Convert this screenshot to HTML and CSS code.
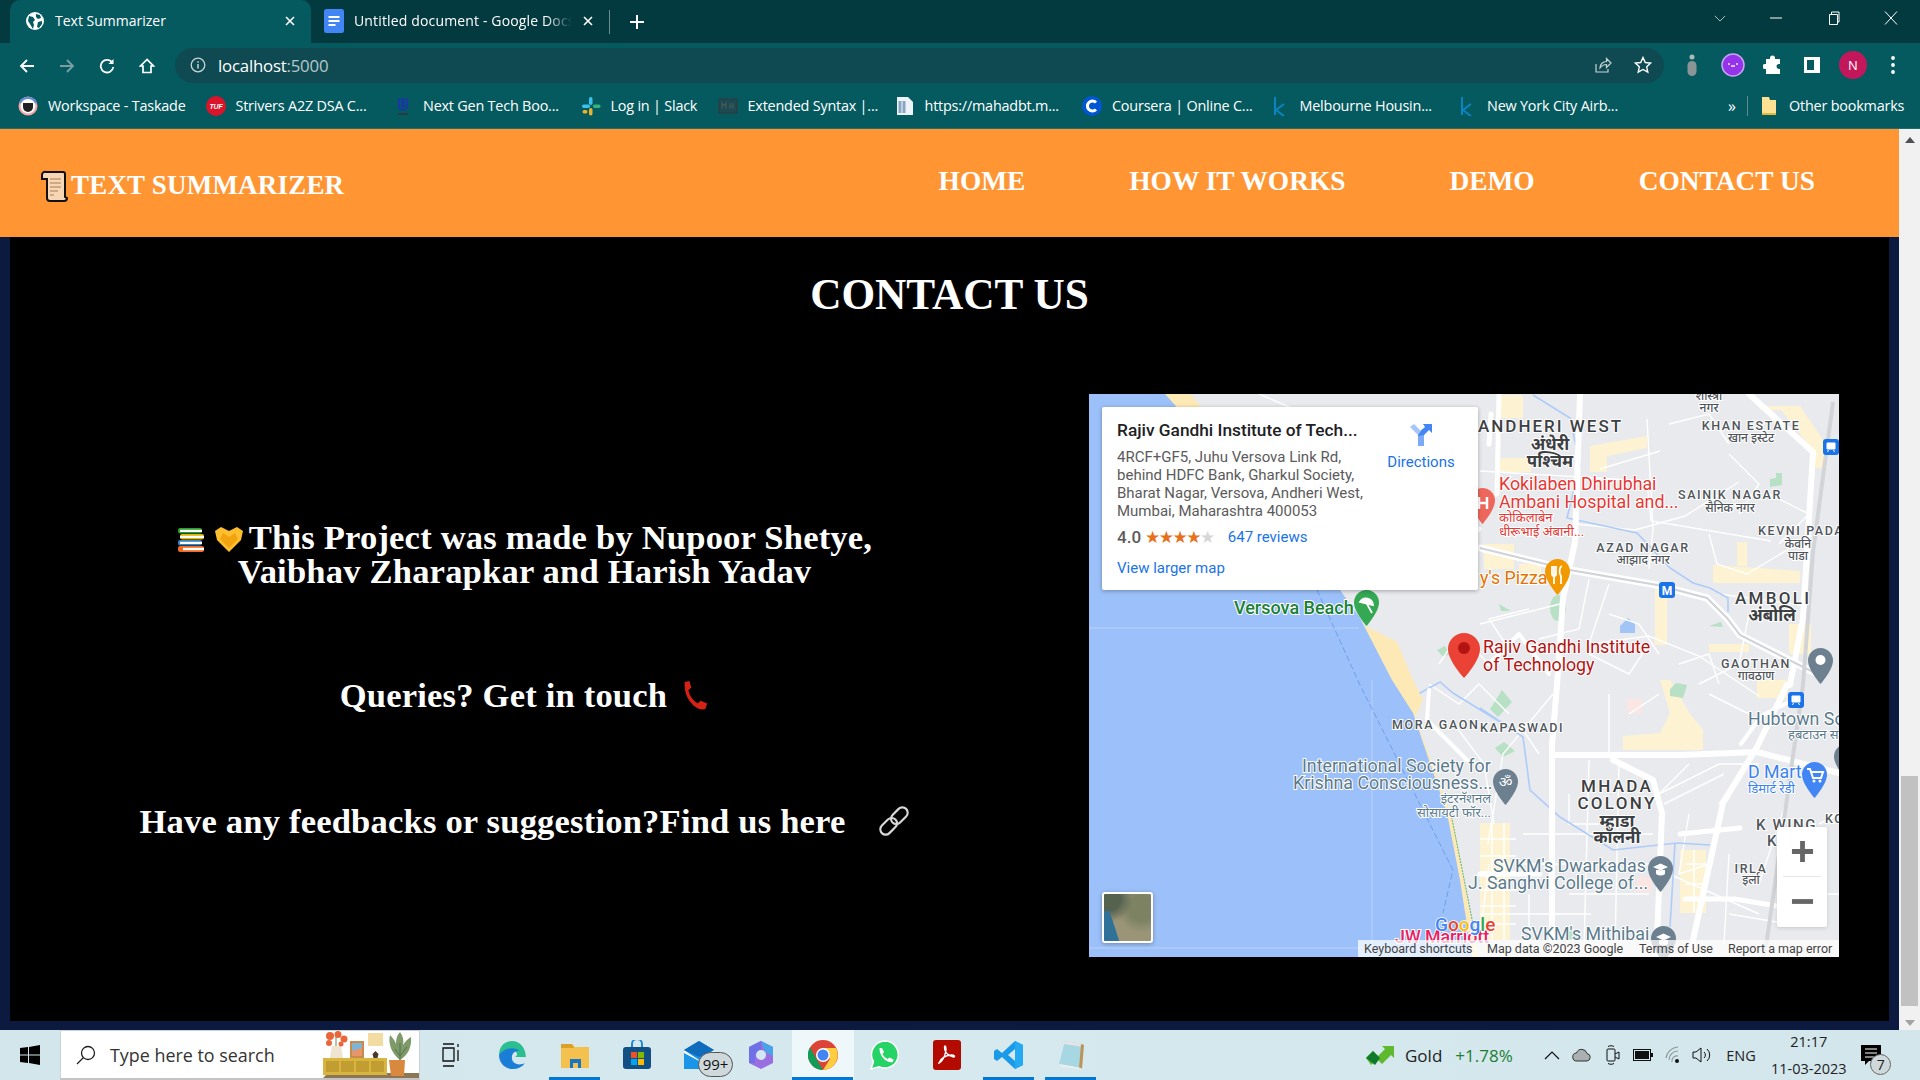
FILE: index.html
```html
<!DOCTYPE html>
<html lang="en">
<head>
    <meta charset="UTF-8">
    <meta name="viewport" content="width=device-width, initial-scale=1.0">
    <title>Text Summarizer</title>
    <link rel="stylesheet" href="styles.css">
</head>
<body>

<!-- Browser tabs -->
<div class="tabbar">
    <div class="tab tab-active">
        <svg class="tab-icon" viewBox="0 0 18 18"><circle cx="9" cy="9" r="9" fill="#fff"/><path d="M3 4l4 1 2 3-2 2 1 3-1 4-3-5-2-3zM10 2l4 1 1 3-3 1-2-2zM12 10l4-1 0 3-3 4-2-1z" fill="#055a60"/></svg>
        <span class="tab-title">Text Summarizer</span>
        <svg class="tab-close" viewBox="0 0 10 10"><path d="M1 1l8 8M9 1l-8 8" stroke="#fff" stroke-width="1.6"/></svg>
    </div>
    <div class="tab tab-second">
        <svg class="tab-icon doc-icon" viewBox="0 0 20 24"><rect width="20" height="24" rx="2.5" fill="#4285f4"/><path d="M4.500 8h11M4.500 12h11M4.500 16h7" stroke="#fff" stroke-width="1.8"/></svg>
        <span class="tab-title tab-fade">Untitled document - Google Docs</span>
        <svg class="tab-close" viewBox="0 0 10 10"><path d="M1 1l8 8M9 1l-8 8" stroke="#fff" stroke-width="1.6"/></svg>
    </div>
    <span class="tab-sep"></span>
    <svg class="tab-new" viewBox="0 0 14 14"><path d="M7 0v14M0 7h14" stroke="#fff" stroke-width="2"/></svg>
    <div class="win-controls">
        <svg class="win-chevron" viewBox="0 0 14 8"><path d="M1 1l6 6 6-6" fill="none" stroke="#c9d6d8" stroke-width="1"/></svg>
        <svg class="win-btn" viewBox="0 0 14 14"><path d="M1 7h12" stroke="#fff" stroke-width="1"/></svg>
        <svg class="win-btn win-restore" viewBox="0 0 14 14"><path d="M2.500 3.500h8v10h-8zM4.500 3.500V1h7.500v10h-1.500" fill="none" stroke="#fff" stroke-width="1"/></svg>
        <svg class="win-btn" viewBox="0 0 14 14"><path d="M1 0.500l12 13M13 0.500l-12 13" stroke="#fff" stroke-width="1"/></svg>
    </div>
</div>

<!-- Address bar -->
<div class="toolbar">
    <div class="nav-buttons">
        <svg viewBox="0 0 16 16"><path d="M15 8H2M8 2L2 8l6 6" fill="none" stroke="#fff" stroke-width="1.800"/></svg>
        <svg viewBox="0 0 16 16"><path d="M1 8h13M8 2l6 6-6 6" fill="none" stroke="#7c9ea2" stroke-width="1.800"/></svg>
        <svg viewBox="0 0 16 16"><path d="M13.500 5A6.300 6.300 0 1 0 14.300 9" fill="none" stroke="#fff" stroke-width="1.800"/><path d="M14.500 1v5h-5z" fill="#fff"/></svg>
        <svg viewBox="0 0 16 16"><path d="M8 1.500L1.500 8H4v6.500h8V8h2.500z" fill="none" stroke="#fff" stroke-width="1.700"/></svg>
    </div>
    <div class="omnibox">
        <svg class="info-icon" viewBox="0 0 16 16"><circle cx="8" cy="8" r="6.800" fill="none" stroke="#c5d3d5" stroke-width="1.300"/><path d="M8 7v4.500M8 4.300v1.400" stroke="#c5d3d5" stroke-width="1.500"/></svg>
        <span class="url">localhost<span class="url-port">:5000</span></span>
        <svg class="omni-action" viewBox="0 0 18 18"><path d="M2 8v8h12v-3M6 12c0-4 3-6.500 6.500-6.500V2.500L17 7l-4.500 4.500V8.500C9.500 8.500 7.500 10 6 12z" fill="none" stroke="#c5d3d5" stroke-width="1.200"/></svg>
        <svg class="omni-action" viewBox="0 0 18 18"><path d="M9 1.500l2.300 5 5.400.6-4 3.700 1.100 5.400L9 13.500l-4.800 2.700 1.100-5.400-4-3.700 5.400-.6z" fill="none" stroke="#fff" stroke-width="1.400"/></svg>
    </div>
    <div class="ext-icons">
        <svg viewBox="0 0 20 24"><circle cx="10" cy="4" r="2.500" fill="#aeb9ba"/><rect x="5.500" y="8" width="9" height="15" rx="4.500" fill="#8b9596"/></svg>
        <svg viewBox="0 0 24 24"><circle cx="12" cy="12" r="11" fill="#9333ea" stroke="#c9a5f0" stroke-width="1.500"/><path d="M7 11h2M15 11h2M10 13h4" stroke="#f1e4ff" stroke-width="1.500"/></svg>
        <svg viewBox="0 0 20 20"><path d="M7 3a2.500 2.500 0 0 1 5 0v1h5v5h-1a2.500 2.500 0 0 0 0 5h1v5H3v-5H2a2.500 2.500 0 0 1 0-5h1V4h4z" fill="#fff"/></svg>
        <svg viewBox="0 0 20 20"><rect x="2" y="2" width="16" height="16" fill="#fff"/><rect x="5" y="5" width="7" height="10" fill="#055a60"/></svg>
        <span class="avatar">N</span>
        <svg viewBox="0 0 6 20"><circle cx="3" cy="3" r="1.900" fill="#fff"/><circle cx="3" cy="10" r="1.900" fill="#fff"/><circle cx="3" cy="17" r="1.900" fill="#fff"/></svg>
    </div>
</div>

<!-- Bookmarks -->
<div class="bookmarks">
    <a class="bm">
        <svg viewBox="0 0 20 20"><circle cx="10" cy="10" r="9.500" fill="#f8a5a5"/><circle cx="10" cy="10" r="7.500" fill="#fff"/><path d="M5 7h10v4a5 5 0 0 1-10 0z" fill="#222"/><path d="M2 7a9 9 0 0 1 16 0" fill="none" stroke="#5a8fd8" stroke-width="2"/></svg>
        <span>Workspace - Taskade</span>
    </a>
    <a class="bm">
        <svg viewBox="0 0 20 20"><circle cx="10" cy="10" r="10" fill="#d9142b"/><text x="10" y="12.500" class="tuf-text">TUF</text></svg>
        <span>Strivers A2Z DSA C...</span>
    </a>
    <a class="bm">
        <svg viewBox="0 0 20 20"><path d="M6 2v8a4 4 0 0 0 8 0V2M9 2v8a1 1 0 0 0 2 0V2" fill="none" stroke="#1c2fb8" stroke-width="1.500"/><path d="M5 18h10" stroke="#333" stroke-width="1.500"/></svg>
        <span>Next Gen Tech Boo...</span>
    </a>
    <a class="bm bm-short">
        <svg viewBox="0 0 20 20"><rect x="8" y="1" width="3.500" height="8" rx="1.700" fill="#36c5f0"/><rect x="1" y="8.500" width="8" height="3.500" rx="1.700" fill="#36c5f0"/><rect x="12" y="8.500" width="7.500" height="3.500" rx="1.700" fill="#2eb67d"/><rect x="8" y="12" width="3.500" height="7.500" rx="1.700" fill="#ecb22e"/><rect x="1.500" y="14" width="5" height="3.500" rx="1.700" fill="#ecb22e"/></svg>
        <span>Log in | Slack</span>
    </a>
    <a class="bm bm-mid">
        <svg viewBox="0 0 20 20"><rect x="1" y="3" width="18" height="14" fill="#1c4a50" stroke="#2d3b3d"/><path d="M4 13V7l2 3 2-3v6M12 7v6M15 7v6M12 10h3" stroke="#44595c" stroke-width="1.200" fill="none"/></svg>
        <span>Extended Syntax |...</span>
    </a>
    <a class="bm">
        <svg viewBox="0 0 20 20"><path d="M2 1h11l5 5v13H2z" fill="#eef3f8"/><path d="M5 5v12M9 5v12" stroke="#88a6c4" stroke-width="3"/></svg>
        <span>https://mahadbt.m...</span>
    </a>
    <a class="bm">
        <svg viewBox="0 0 20 20"><circle cx="10" cy="10" r="10" fill="#0056d2"/><path d="M14 6.500a5 5 0 1 0 0 7" fill="none" stroke="#fff" stroke-width="3"/></svg>
        <span>Coursera | Online C...</span>
    </a>
    <a class="bm">
        <svg viewBox="0 0 20 20"><path d="M5 1v18M14 8l-8 6 8 6" fill="none" stroke="#0a85c2" stroke-width="2"/></svg>
        <span>Melbourne Housin...</span>
    </a>
    <a class="bm bm-last">
        <svg viewBox="0 0 20 20"><path d="M5 1v18M14 8l-8 6 8 6" fill="none" stroke="#0a85c2" stroke-width="2"/></svg>
        <span>New York City Airb...</span>
    </a>
    <span class="bm-more">»</span>
    <span class="bm-sep"></span>
    <a class="bm bm-other">
        <svg viewBox="0 0 20 20"><path d="M3 1h7l1 3h6v15H3z" fill="#fde293"/><path d="M3 17h14v2H3z" fill="#e2b93b"/></svg>
        <span>Other bookmarks</span>
    </a>
</div>

<div class="viewport">
    <div class="page">
        <header class="site-header">
            <div class="logo">
                <svg class="logo-scroll" viewBox="0 0 28 32"><path d="M6 2h17a2 2 0 0 1 2 2v23l2 1a3 3 0 0 1-3 3H10a3 3 0 0 1-3-3V9H2V5a3 3 0 0 1 4-3z" fill="#f6d6b5" stroke="#111" stroke-width="2"/><path d="M10 9h11M10 13h11M10 17h11M10 21h8M10 25h4" stroke="#c49b73" stroke-width="1.500"/></svg>
                <span>TEXT SUMMARIZER</span>
            </div>
            <nav class="site-nav">
                <a>HOME</a>
                <a>HOW IT WORKS</a>
                <a>DEMO</a>
                <a>CONTACT US</a>
            </nav>
        </header>

        <main class="contact">
            <h1>CONTACT US</h1>
            <div class="contact-row">
                <div class="contact-text">
                    <p class="credits">
                        <svg class="emoji" viewBox="0 0 28 26"><rect x="1" y="1" width="24" height="5.500" rx="2" fill="#2aa02a"/><rect x="3" y="2.800" width="22" height="2.200" fill="#fff"/><rect x="3" y="7" width="24" height="5.500" rx="2" fill="#e3b505"/><rect x="3" y="8.800" width="24" height="2.200" fill="#fff"/><rect x="1" y="13" width="24" height="5.500" rx="2" fill="#3584c8"/><rect x="3" y="14.800" width="22" height="2.200" fill="#fff"/><rect x="1" y="19" width="26" height="6" rx="2" fill="#f26a21"/><rect x="6" y="20.800" width="21" height="2.400" fill="#fff"/></svg>
                        <svg class="emoji hands" viewBox="0 0 30 28"><path d="M1 6l6-4 8 4 8-4 6 4-2 9-12 12L3 15z" fill="#ffbe2e"/><path d="M9 8l6 4 6-4 3 6-9 9-9-9z" fill="#f2a310"/></svg>
                        This Project was made by Nupoor Shetye,<br>Vaibhav Zharapkar and Harish Yadav
                    </p>
                    <p class="queries">
                        Queries? Get in touch
                        <svg class="emoji phone" viewBox="0 0 28 32"><path d="M3 2l5-1 2 7-3 3c1 6 5 11 10 14l3-3 7 3-2 6c-3 1-7 0-10-2C8 24 2 15 3 2z" fill="#d62214"/></svg>
                    </p>
                    <p class="feedback">
                        Have any feedbacks or suggestion?Find us here
                        <svg class="emoji link" viewBox="0 0 30 30"><g fill="none" stroke="#d8d8d8" stroke-width="2"><rect x="-9" y="-5" width="18" height="10" rx="5" transform="translate(10 20) rotate(-45)"/><rect x="-9" y="-5" width="18" height="10" rx="5" transform="translate(20 10) rotate(-45)"/></g></svg>
                    </p>
                </div>

                <div class="map">
                    <svg class="map-canvas" viewBox="0 0 750 563">
                        <defs>
                            <path id="pin" d="M12.500 0C5.600 0 0 5.600 0 12.500 0 22 12.500 36 12.500 36S25 22 25 12.500C25 5.600 19.400 0 12.500 0z"/>
                        </defs>
                        <rect width="750" height="563" fill="#e8eaed"/>

                        <!-- yellow blocks -->
                        <g fill="#fdf3d2">
                            <path d="M408 1h26v23h-26zM501 52l57-10v12l-40 8v16h-17zM671 12l40 0 27 40v22h-12l-4-20-30-38h-21zM566 191h12v60h-12zM624 171l87 6v12h-87zM648 148h10v24h-10z"/>
                            <path d="M571 286h10l20 34 13 16v20h-80v-14l37-3 10-20zM591 456h26v63h-26zM391 429h30v117h-30zM668 286h30v18h-30zM620 250h40v8h-40z"/>
                            <path d="M395 150h30v25h-30zM410 64h32v14h-32zM430 170h22v14h-22zM700 230h22v30h-22z"/>
                        </g>
                        <!-- parks, water blobs -->
                        <g fill="#b7e0c4">
                            <path d="M681 85l6-1 0-5 6 0 0 12-12 2zM581 295l6-6 11 2-4 13-13-2zM406 354l9-6 11 9-12 6zM401 315l12-19 10 12-14 15z"/>
                            <ellipse cx="469" cy="214" rx="8" ry="13"/>
                            <path d="M410 210l12 7-10 0zM620 232l12-4 2 5zM645 470l12 0 0 8zM473 540l10-5 6 9-12 2zM348 256l8-4 5 8-7 3z"/>
                        </g>
                        <path d="M538 305h15v14h-15zM548 483h15v15h-15z" fill="#fbe6e4"/>
                        <path d="M531 232l8-8 7 6v9h-15z" fill="#a3c4f6"/>

                        <!-- thin streets -->
                        <g fill="none" stroke="#fff" stroke-width="1.400">
                            <path d="M391 77l167 10 4 40 120 20M558 25l6 110-4 40M511 75l60-18M486 130l60 6 50-14 54-34M620 140l8 30 30 10 50-30M630 200l90 12M391 230l80-20M500 185l-10 50-40 10M520 190l-20 60 60-8 50 20 60 40M660 220l-10 50-40 20"/>
                            <path d="M464 300l-50 60-15 90M500 366l-5 190M530 366l-4 190M434 440l130 0M434 470l130 0M600 370l-30 30 60-30 40 0M575 410l60-30M670 350l-40 60M640 460l-5 90M580 480l90 40M620 300l40 20M520 300l0 60M570 300l-30 20M700 400l-30 90M480 500l80 0M391 520l80 0M640 520l60 10"/>
                            <path d="M340 290l30 20 20-20 30 30M365 330l30 40 10 60M400 470l-10 80M430 330l20 30M350 270l20 -30 30 30M730 430l20 -10M725 500l25 0M170 0l70 30M60 0l40 30"/>
                            <path d="M500 260l40 20 20-30M590 270l30-10 10 30M520 220l30 10 20 30M420 255l-20-30 40-10M600 420l-10 60 30-10M480 400l0 30 30 0M440 500l0 50M462 520l40 0M680 100l40 20-30 30M640 60l30 30-20 30M580 30l40-10 20 30"/>
                            <path d="M391 445h36M391 462h36M391 478h36M391 496h36M391 512h36M391 530h36M403 429v117M415 429v117M597 470h20M597 490h20M605 456v63"/>
                        </g>
                        <!-- creeks -->
                        <g fill="none" stroke="#aecbfa" stroke-width="1.600">
                            <path d="M444 1l37 23 10 47-13 53 70 15 33 35 23 15 17 5 18 10v14"/>
                            <path d="M391 314l43 29 7 53 30 27 53 33 64-7 33 2M586 449l-5 84M324 303l27-15 13 11 47 29"/>
                        </g>
                        <!-- main roads -->
                        <g fill="none" stroke="#fff" stroke-linecap="round" stroke-linejoin="round">
                            <path stroke-width="6" d="M491 0l-5 148-12 56-6 87-5 60v212"/>
                            <path stroke-width="6" d="M660 0l64 58-10 166-13 67-3 0-30 62-34 56-30 137-3 17"/>
                            <path stroke-width="6" d="M464 361h127l77-3 82 21M524 366l40 20 9 33-5 127v17"/>
                            <path stroke-width="5" d="M568 550l-3 13M596 505l50 0 60 10M200 35l75 70 60 60 55 -30M391 480h60M410 0l-2 100M402 20l-2 30M591 440l60 -6"/>
                            <path stroke-width="4" d="M340 296l-2 30 40 40M652 350l20 -28 40 -20M400 270l30 -30 30 40"/>
                            <path stroke-width="7" d="M391 154l90 22 87 15 50 13 20 20 13 17 73 37"/>
                        </g>
                        <path fill="none" stroke="#cfd2d6" stroke-width="2" d="M391 154l90 22 87 15 50 13 20 20 13 17 73 37"/>
                        <path fill="none" stroke="#d2d4d8" stroke-width="4" d="M744 8l-20 150-10 133-36 255-4 17"/>

                        <!-- sea and sand -->
                        <path fill="#fde9b5" d="M86 0h16l144 190 28 41 34 17 16 38 10 20-8 17 38 103 17 93 8 44H0V0z"/>
                        <path fill="#9cc0f9" d="M0 0h76l54 60 70 70 51 66 20 28 32 62 21 33 34 100 13 67 12 77H0z"/>
                        <g fill="none" stroke="#b9d2fa" stroke-width="1">
                            <path d="M0 234h270M283 286v277M0 554h380"/>
                        </g>
                        <path fill="none" stroke="#6e9eee" stroke-width="1" stroke-dasharray="6 3" d="M228 196l43 95 93 185-10 43"/>
                        <path fill="none" stroke="#5db36b" stroke-width="1" stroke-dasharray="2 1" d="M362 420l18 90 8 40"/>

                        <!-- area labels -->
                        <g class="area">
                            <text x="389" y="38" class="big">ANDHERI WEST</text>
                            <text x="662" y="36" class="mid">KHAN ESTATE</text>
                            <text x="641" y="105" class="mid">SAINIK NAGAR</text>
                            <text x="669" y="141" class="mid left">KEVNI PADA</text>
                            <text x="554" y="158" class="mid">AZAD NAGAR</text>
                            <text x="646" y="210" class="big left wide">AMBOLI</text>
                            <text x="667" y="274" class="mid">GAOTHAN</text>
                            <text x="303" y="335" class="mid left">MORA GAON</text>
                            <text x="391" y="338" class="mid left">KAPASWADI</text>
                            <text x="528" y="398" class="big mid-anchor wide">MHADA</text>
                            <text x="528" y="415" class="big mid-anchor wide">COLONY</text>
                            <text x="667" y="436" class="mid left big-ish">K WING</text>
                            <text x="736" y="429" class="mid left">KO</text>
                            <text x="678" y="452" class="mid left big-ish">K</text>
                            <text x="662" y="479" class="mid">IRLA</text>
                        </g>
                        <g class="hindi">
                            <text x="620" y="6">शास्त्री</text>
                            <text x="620" y="18">नगर</text>
                            <text x="461" y="56" class="hindi-big">अंधेरी</text>
                            <text x="461" y="73" class="hindi-big">पश्चिम</text>
                            <text x="662" y="48">खान इस्टेट</text>
                            <text x="641" y="118">सैनिक नगर</text>
                            <text x="709" y="154">केवनि</text>
                            <text x="709" y="166">पाडा</text>
                            <text x="554" y="170">आझाद नगर</text>
                            <text x="683" y="227" class="hindi-big">अंबोलि</text>
                            <text x="667" y="286">गावठाण</text>
                            <text x="528" y="433" class="hindi-big">म्हाडा</text>
                            <text x="528" y="449" class="hindi-big">कॉलनी</text>
                            <text x="662" y="490">इर्ला</text>
                        </g>

                        <!-- places -->
                        <g class="place">
                            <text x="410" y="96" class="red">Kokilaben Dhirubhai</text>
                            <text x="410" y="114" class="red">Ambani Hospital and...</text>
                            <text x="410" y="128" class="red small">कोकिलाबेन</text>
                            <text x="410" y="142" class="red small">धीरूभाई अंबानी...</text>
                            <text x="391" y="190" class="orange">y's Pizza</text>
                            <text x="394" y="259" class="dark-red">Rajiv Gandhi Institute</text>
                            <text x="394" y="277" class="dark-red">of Technology</text>
                            <text x="145" y="220" class="green">Versova Beach</text>
                            <text x="659" y="331" class="slate">Hubtown So</text>
                            <text x="699" y="345" class="slate small">हबटाउन स</text>
                            <text x="659" y="384" class="blue">D Mart</text>
                            <text x="659" y="399" class="blue small">डिमार्ट रेडी</text>
                            <text x="213" y="378" class="slate">International Society for</text>
                            <text x="204" y="395" class="slate">Krishna Consciousness...</text>
                            <text x="402" y="409" class="slate small end">इंटरनॅशनल</text>
                            <text x="402" y="423" class="slate small end">सोसायटी फॉर...</text>
                            <text x="404" y="478" class="slate">SVKM's Dwarkadas</text>
                            <text x="379" y="495" class="slate">J. Sanghvi College of...</text>
                            <text x="432" y="546" class="slate">SVKM's Mithibai</text>
                            <text x="306" y="549" class="pink">JW Marriott</text>
                        </g>

                        <!-- pins -->
                        <use href="#pin" x="381" y="94" fill="#ee675c"/>
                        <path d="M390 103v12M398 103v12M390 109h8" stroke="#fff" stroke-width="2.500"/>
                        <use href="#pin" x="456" y="165" fill="#f29900"/>
                        <path d="M463 172v8a2 2 0 0 0 4 0v-8M465 172v18M473 172c-3 1-3 8-1 10v8" stroke="#fff" stroke-width="1.800" fill="none"/>
                        <use href="#pin" x="265" y="196" fill="#34a853"/>
                        <path d="M271 208a7 7 0 0 1 13 3l-13-3zM278 210l5 9" stroke="#fff" stroke-width="1.800" fill="#fff"/>
                        <use href="#pin" x="719" y="254" fill="#6c8090"/>
                        <circle cx="731.500" cy="266" r="5" fill="#fff"/>
                        <use href="#pin" x="713" y="368" fill="#4285f4"/>
                        <path d="M718 375h3l3 9h8l2-6h-12" fill="none" stroke="#fff" stroke-width="2"/><circle cx="725" cy="387" r="1.500" fill="#fff"/><circle cx="731" cy="387" r="1.500" fill="#fff"/>
                        <use href="#pin" x="404" y="375" fill="#6c8090"/>
                        <text x="416.500" y="393" class="pin-glyph">ॐ</text>
                        <use href="#pin" x="559" y="462" fill="#6c8090"/>
                        <path d="M564 473l7.500-3.500 7.500 3.500-7.500 3.500zM567 476v4c3 2 6 2 9 0v-4" fill="#fff"/>
                        <use href="#pin" x="562" y="532" fill="#6c8090"/>
                        <path d="M567 543l7.500-3.500 7.500 3.500-7.500 3.500zM570 546v4c3 2 6 2 9 0v-4" fill="#fff"/>
                        <use href="#pin" x="745" y="350" fill="#6c8090"/>
                        <g>
                            <path d="M375 239a16 16 0 0 0-16 16c0 12 16 29 16 29s16-17 16-29a16 16 0 0 0-16-16z" fill="#ea4335"/>
                            <circle cx="375" cy="254" r="6" fill="#b31412"/>
                        </g>
                        <!-- transit badges -->
                        <rect x="734" y="45" width="16" height="16" rx="3" fill="#1a73e8"/>
                        <path d="M738 49h8v6h-8zM739.500 56l-1 2M744.500 56l1 2" fill="#fff" stroke="#fff"/>
                        <rect x="699" y="298" width="16" height="16" rx="3" fill="#1a73e8"/>
                        <path d="M703 302h8v6h-8zM704.500 309l-1 2M709.500 309l1 2" fill="#fff" stroke="#fff"/>
                        <rect x="570" y="188" width="16" height="16" rx="3" fill="#1a73e8"/>
                        <text x="578" y="200.500" class="metro">M</text>

                        <!-- google mark -->
                        <text x="346" y="537" class="google"><tspan fill="#4285f4">G</tspan><tspan fill="#ea4335">o</tspan><tspan fill="#fbbc04">o</tspan><tspan fill="#4285f4">g</tspan><tspan fill="#34a853">l</tspan><tspan fill="#ea4335">e</tspan></text>
                    </svg>

                    <!-- info card, over the map -->
                    <div class="map-card">
                        <div class="card-main">
                            <div class="card-title">Rajiv Gandhi Institute of Tech...</div>
                            <div class="card-address">4RCF+GF5, Juhu Versova Link Rd,<br>behind HDFC Bank, Gharkul Society,<br>Bharat Nagar, Versova, Andheri West,<br>Mumbai, Maharashtra 400053</div>
                            <div class="card-rating">
                                <span class="rating-num">4.0</span>
                                <span class="stars">★★★★<span class="star-off">★</span></span>
                                <a class="card-link reviews">647 reviews</a>
                            </div>
                            <a class="card-link larger">View larger map</a>
                        </div>
                        <div class="card-dir">
                            <svg viewBox="0 0 24 24"><path d="M14 1h9v9l-3-3-5 5v11h-6V10l7-6z" fill="#4285f4"/><path d="M1 4l4-3 7 7-3 4z" fill="#a6c5fa"/><path d="M9 23V13l6-1v11z" fill="#7baaf7"/></svg>
                            <a class="card-link">Directions</a>
                        </div>
                    </div>

                    <div class="map-thumb"></div>

                    <div class="zoom-ctl">
                        <svg viewBox="0 0 24 24"><path d="M12 1v22M1 12h22" stroke="#666" stroke-width="5"/></svg>
                        <span class="zoom-sep"></span>
                        <svg viewBox="0 0 24 24"><path d="M1 12h22" stroke="#666" stroke-width="5"/></svg>
                    </div>

                    <div class="map-attrib">
                        <span class="attr-keys">Keyboard shortcuts</span>
                        <span class="attr-data">Map data ©2023 Google</span>
                        <span class="attr-terms">Terms of Use</span>
                        <span>Report a map error</span>
                    </div>
                </div>
            </div>
        </main>
    </div>

    <div class="scrollbar">
        <span class="arrow-up"></span>
        <span class="scroll-thumb"></span>
        <span class="arrow-down"></span>
    </div>
</div>

<!-- Windows taskbar -->
<div class="taskbar">
    <div class="start">
        <svg viewBox="0 0 20 20"><path d="M0 3l8-1v7.500H0zM9 1.900L20 0v9.500H9zM0 10.500h8V18l-8-1zM9 10.500h11V20L9 18.100z" fill="#000"/></svg>
    </div>
    <div class="search">
        <svg class="search-icon" viewBox="0 0 20 20"><circle cx="12" cy="8" r="6.500" fill="none" stroke="#222" stroke-width="1.300"/><path d="M7.500 12.500L1 19" stroke="#222" stroke-width="1.300"/></svg>
        <span class="search-text">Type here to search</span>
        <svg class="search-art" viewBox="0 0 96 47">
            <path d="M0 47l5-5h91v5z" fill="#8d7655"/>
            <rect x="0" y="27" width="64" height="17" fill="#d8b53f"/>
            <path d="M3 30h13v11H3zM18 30h13v11H18zM33 30h13v11H33zM48 30h13v11H48z" fill="#c29e32"/>
            <path d="M9 15h9l2 12H7z" fill="#efe4cf"/>
            <path d="M13 15V6" stroke="#6b8a4a"/>
            <g fill="#e8673a"><circle cx="7" cy="5" r="4"/><circle cx="15" cy="3.500" r="3.500"/><circle cx="21" cy="8" r="3.500"/><circle cx="6" cy="12" r="3"/><circle cx="18" cy="13" r="2.500"/></g>
            <rect x="27" y="10" width="14" height="17" fill="#c98a4a"/><rect x="29" y="12" width="10" height="13" fill="#7fb4d6"/><path d="M29 20l10-3v8H29z" fill="#e9956a"/>
            <rect x="45" y="2" width="15" height="13" fill="#f3dca1"/><path d="M52.500 15v5l-3 3 1 4h4l1-4-3-3z" fill="#4c3a2a"/>
            <path d="M77 29c-9-7-12-17-10-25 3 3 5 6 6 9 0-5 1-9 4-12 3 4 4 8 3 13 2-3 4-6 8-8 1 10-3 18-11 23z" fill="#7d9a68"/>
            <path d="M77 29V12M72 18l5 7M84 16l-7 9" stroke="#54704a" fill="none"/>
            <path d="M66 29h16l-1 16H68z" fill="#d9893d"/>
        </svg>
    </div>
    <div class="tb-apps">
        <div class="tb-slot">
            <svg class="icon-sm" viewBox="0 0 20 24"><path d="M2 1h11M2 23h11M2 5h11v13H2zM17 1v3M17 7v11" fill="none" stroke="#111" stroke-width="1.300"/></svg>
        </div>
        <div class="tb-slot">
            <svg viewBox="0 0 30 30"><path d="M28 18C28 8 22 1 14 1 6 1 1 7 1 15c4-6 12-8 17-3 2 2 1 4-1 5h11z" fill="#2bbf8f"/><path d="M1 15c0 8 6 14 14 14 5 0 9-2 12-6-6 3-12 1-13-4-1-6 4-9 8-8-6-5-16-3-21 4z" fill="#1b7ed6"/></svg>
        </div>
        <div class="tb-slot open">
            <svg viewBox="0 0 30 28"><path d="M1 3h11l3 3h14v21H1z" fill="#f4c04e"/><path d="M1 3h11l2 4H1z" fill="#dc9f2a"/><rect x="10" y="18" width="11" height="9" fill="#1976c4"/><rect x="13" y="22" width="5" height="5" fill="#f4c04e"/></svg>
        </div>
        <div class="tb-slot">
            <svg viewBox="0 0 30 30"><path d="M10 8V4a5 5 0 0 1 10 0v4" fill="none" stroke="#1e88d8" stroke-width="2"/><rect x="1" y="7" width="28" height="22" rx="3" fill="#114f84"/><path d="M9 12h6v6H9z" fill="#f25022"/><path d="M16 12h6v6h-6z" fill="#7fba00"/><path d="M9 19h6v6H9z" fill="#00a4ef"/><path d="M16 19h6v6h-6z" fill="#ffb900"/></svg>
        </div>
        <div class="tb-slot">
            <svg viewBox="0 0 30 28"><path d="M15 0L30 9v19H0V9z" fill="#1a95e8"/><path d="M0 9l15 10L30 9v3L15 20 0 12z" fill="#fff"/><path d="M15 0L30 9 15 16 0 9z" fill="#0f6cbd"/></svg>
            <span class="mail-badge">99+</span>
        </div>
        <div class="tb-slot">
            <svg viewBox="0 0 28 30"><path d="M14 1l12 6v16l-12 6-12-6V7z" fill="#9a6ee0"/><path d="M14 1l12 6v9l-8-4z" fill="#4aa3e8"/><path d="M2 7l12-6v9l-6 4v9l-6 0z" fill="#6f6fe6"/><circle cx="14" cy="15" r="5" fill="#d3e8ee"/></svg>
        </div>
        <div class="tb-slot active">
            <svg viewBox="0 0 30 30"><circle cx="15" cy="15" r="15" fill="#db4437"/><path d="M15 30A15 15 0 0 1 2 7.500L9 20z" fill="#0f9d58"/><path d="M15 8h13a15 15 0 0 1-13 22l7-11z" fill="#ffcd40"/><circle cx="15" cy="15" r="7" fill="#fff"/><circle cx="15" cy="15" r="5.500" fill="#4285f4"/></svg>
        </div>
        <div class="tb-slot">
            <svg viewBox="0 0 30 30"><path d="M15 1a13.500 13.500 0 0 0-11.500 20.500L1 29l8-2.300A13.500 13.500 0 1 0 15 1z" fill="#25d366" stroke="#fff" stroke-width="1.500"/><path d="M10 8l2 0 2 4-1.500 2c1 2 3 4 5 5l2-1.500 4 2-.5 2.500c-6 2-14-6-13.500-14z" fill="#fff"/></svg>
        </div>
        <div class="tb-slot">
            <svg viewBox="0 0 28 30"><rect width="28" height="30" rx="3" fill="#b30b00"/><path d="M6 23c4-2 6-7 7-13 0-4-1-5-1.500-3-.5 4 3 9 9 10 2 0 1-2-2-2-5 0-11 3-12.500 8z" fill="none" stroke="#fff" stroke-width="1.400"/></svg>
        </div>
        <div class="tb-slot open">
            <svg viewBox="0 0 30 30"><path d="M21 1l8 4v20l-8 4-13-12-5 4-3-2V11l3-2 5 4zM21 9l-7 6 7 6z" fill="#1a9ae8"/><path d="M21 1l8 4v20l-8 4z" fill="#23aaf2"/></svg>
        </div>
        <div class="tb-slot open">
            <svg viewBox="0 0 28 30"><path d="M8 1l18 3-2 24L2 24z" fill="#a6d7e2"/><path d="M8 1l18 3v3L7 4z" fill="#e4e4e4"/><path d="M24 4l3 1-2 24-3-1z" fill="#b99658"/><path d="M2 24l22 4 1 1-20-2z" fill="#eee"/></svg>
        </div>
    </div>
    <div class="tray">
        <svg class="gold-icon" viewBox="0 0 30 22"><path d="M0 14l7-7 5 5 7-7-3-3h12v12l-3-3-9 9-5-5-6 6z" fill="#5fb92f"/><path d="M0 14l7-7 7 7-5 7z" fill="#0f7b2a"/></svg>
        <span class="gold">Gold</span>
        <span class="gold-pct">+1.78%</span>
        <svg class="tray-chev" viewBox="0 0 16 9"><path d="M1 8l7-7 7 7" fill="none" stroke="#111" stroke-width="1.200"/></svg>
        <svg class="tray-cloud" viewBox="0 0 20 14"><path d="M5 13a4 4 0 0 1-.5-8A5.500 5.500 0 0 1 15 5.500a3.800 3.800 0 0 1 0 7.500z" fill="#aab0b2" stroke="#333"/></svg>
        <svg class="tray-cam" viewBox="0 0 14 20"><rect x="1" y="4" width="8" height="12" rx="1" fill="none" stroke="#111"/><path d="M9 9l4-2v7l-4-2M2 1.500c2-1 4-1 6 0M2 18.500c2 1 4 1 6 0" fill="none" stroke="#111"/></svg>
        <svg class="tray-bat" viewBox="0 0 20 12"><rect x="0.500" y="0.500" width="17" height="11" fill="none" stroke="#111"/><rect x="2" y="2" width="14" height="8" fill="#111"/><rect x="18" y="4" width="2" height="4" fill="#111"/></svg>
        <svg class="tray-wifi" viewBox="0 0 18 18"><path d="M1 12A13 13 0 0 1 13 1M4 14a9 9 0 0 1 9-9M7 16a5 5 0 0 1 6-6" fill="none" stroke="#8c9698" stroke-width="1.200"/><circle cx="12" cy="15" r="2" fill="#111"/></svg>
        <svg class="tray-vol" viewBox="0 0 20 18"><path d="M1 6h3l5-4v14l-5-4H1z" fill="none" stroke="#111"/><path d="M12 6a4 4 0 0 1 0 6M15 3a8 8 0 0 1 0 12" fill="none" stroke="#111"/></svg>
        <span class="lang">ENG</span>
        <div class="clock"><span>21:17</span><span>11-03-2023</span></div>
        <div class="notify">
            <svg viewBox="0 0 20 20"><path d="M0 0h20v16H8l-4 4v-4H0z" fill="#000"/><path d="M4 4h12M4 8h12M4 12h9" stroke="#fff" stroke-width="1.200"/></svg>
            <span class="notify-badge">7</span>
        </div>
    </div>
</div>

</body>
</html>
```

FILE: styles.css
```css
* {
    box-sizing: border-box;
}

html, body {
    margin: 0;
    padding: 0;
    width: 1920px;
    height: 1080px;
    overflow: hidden;
}

body {
    display: flex;
    flex-direction: column;
    font-family: "Open Sans", "Noto Sans", sans-serif;
    background: #0d1a40;
}

svg {
    display: block;
    flex: none;
}

/* Browser chrome */
.tabbar {
    height: 43px;
    background: #033a40;
    display: flex;
    align-items: flex-end;
    color: #fff;
    font-size: 14px;
    padding-left: 10px;
}

.tab {
    height: 43px;
    display: flex;
    align-items: center;
    padding-bottom: 2px;
}

.tab-active {
    width: 301px;
    background: #055a60;
    border-radius: 10px 10px 0 0;
    padding-left: 16px;
}

.tab-second {
    width: 298px;
    padding-left: 13px;
}

.tab-icon {
    width: 18px;
    height: 18px;
    margin-right: 11px;
}

.doc-icon {
    width: 20px;
    height: 24px;
    margin-right: 10px;
}

.tab-title {
    width: 220px;
    white-space: nowrap;
    overflow: hidden;
}

.tab-fade {
    width: 218px;
    letter-spacing: 0.15px;
    -webkit-mask-image: linear-gradient(to right, #000 88%, transparent);
    mask-image: linear-gradient(to right, #000 88%, transparent);
}

.tab-close {
    width: 10px;
    height: 10px;
    margin-left: 10px;
}

.tab-second .tab-close {
    margin-left: 11px;
}

.tab-sep {
    width: 1px;
    height: 24px;
    background: #6f8d90;
    margin-bottom: 9px;
}

.tab-new {
    width: 14px;
    height: 14px;
    margin: 0 0 14px 20px;
}

.win-controls {
    margin-left: auto;
    height: 36px;
    display: flex;
    align-items: center;
    align-self: flex-start;
}

.win-chevron {
    width: 12px;
    height: 7px;
    margin-right: 43px;
}

.win-btn {
    width: 14px;
    height: 14px;
    margin-right: 44px;
}

.win-restore {
    margin-right: 43px;
}

.win-btn:last-child {
    margin-right: 22px;
}

.toolbar {
    height: 43px;
    background: #055a60;
    display: flex;
    align-items: center;
    color: #fff;
}

.nav-buttons {
    width: 175px;
    display: flex;
    align-items: center;
    gap: 24px;
    padding-left: 19px;
    margin-top: 2px;
}

.nav-buttons svg {
    width: 16px;
    height: 16px;
}

.omnibox {
    width: 1489px;
    height: 35px;
    background: #0f4a52;
    border-radius: 18px;
    display: flex;
    align-items: center;
    padding-left: 15px;
    margin-top: 1px;
}

.info-icon {
    width: 16px;
    height: 16px;
}

.url {
    margin-left: 12px;
    font-size: 16.800px;
    letter-spacing: -0.2px;
}

.url-port {
    color: #b6c8ca;
}

.omni-action {
    width: 18px;
    height: 18px;
}

.omni-action:nth-of-type(2) {
    margin-left: auto;
    margin-right: 22px;
}

.omni-action:last-child {
    margin-right: 12px;
}

.ext-icons {
    display: flex;
    align-items: center;
    flex: 1;
}

.ext-icons svg {
    width: 20px;
    height: 20px;
}

.ext-icons svg:nth-child(1) {
    margin-left: 18px;
    height: 24px;
}

.ext-icons svg:nth-child(2) {
    width: 24px;
    height: 24px;
    margin-left: 19px;
}

.ext-icons svg:nth-child(3) {
    margin-left: 18px;
}

.ext-icons svg:nth-child(4) {
    margin-left: 19px;
}

.ext-icons svg:last-child {
    width: 6px;
    margin-left: 23px;
}

.avatar {
    width: 28px;
    height: 28px;
    margin-left: 17px;
    border-radius: 50%;
    background: #c2185b;
    color: #fff;
    font-size: 13px;
    text-align: center;
    line-height: 28px;
}

.bookmarks {
    height: 43px;
    background: #055a60;
    display: flex;
    align-items: center;
    color: #fff;
    font-size: 14.400px;
    letter-spacing: -0.2px;
    padding: 0 0 3px 18px;
    border-bottom: 1px solid #1f6b6f;
}

.bm {
    width: 187.500px;
    display: flex;
    align-items: center;
    gap: 10px;
    white-space: nowrap;
}

.bm svg {
    width: 20px;
    height: 20px;
}

.bm-short {
    width: 137px;
}

.bm-mid {
    width: 177px;
}

.bm-last {
    width: 271px;
}

.bm-more {
    width: 19px;
    font-size: 16px;
}

.bm-sep {
    width: 1px;
    height: 20px;
    background: #5d8a8d;
    margin-right: 11px;
}

.bm-other {
    width: auto;
}

.tuf-text {
    font-family: "Liberation Sans", sans-serif;
    font-size: 7px;
    font-weight: 700;
    font-style: italic;
    fill: #fff;
    text-anchor: middle;
}

/* Page */
.viewport {
    height: 901px;
    display: flex;
}

.page {
    width: 1899px;
    display: flex;
    flex-direction: column;
    font-family: "Liberation Serif", serif;
    color: #fff;
}

.site-header {
    height: 108px;
    background: #ff9633;
    display: flex;
    align-items: center;
    flex: none;
}

.logo {
    display: flex;
    align-items: center;
    margin: 5px 0 0 40px;
    font-size: 27px;
    font-weight: 700;
    letter-spacing: 0.2px;
}

.logo-scroll {
    width: 28px;
    height: 32px;
    margin-right: 3px;
}

.site-nav {
    margin-left: auto;
    display: flex;
    gap: 104px;
    margin-right: 84px;
    margin-top: -3px;
    font-size: 27.400px;
    font-weight: 700;
}

.contact {
    flex: 1;
    background: #000;
    margin: 0 10px 9px;
    display: flex;
    flex-direction: column;
}

h1 {
    margin: 27px 0 0;
    height: 130px;
    text-align: center;
    font-size: 43.300px;
    line-height: 60px;
    font-weight: 700;
}

.contact-row {
    display: flex;
    align-items: flex-start;
}

.contact-text {
    width: 1029px;
    padding: 126px 0 0 0;
    text-align: center;
    font-size: 34.600px;
    line-height: 34px;
    font-weight: 700;
    letter-spacing: 0.18px;
}

.contact-text p {
    margin: 0;
    display: flex;
    justify-content: center;
    align-items: center;
    flex-wrap: wrap;
}

.credits {
    display: block !important;
}

.queries {
    margin-top: 90px !important;
}

.feedback {
    margin-top: 92px !important;
}

.emoji {
    display: inline-block;
    width: 28px;
    height: 26px;
    vertical-align: -4px;
}

.hands {
    width: 30px;
    height: 28px;
    margin-right: -3px;
}

.phone {
    margin-left: 14px;
    height: 30px;
}

.link {
    width: 32px;
    height: 32px;
    margin-left: 32px;
}

/* Embedded map */
.map {
    position: relative;
    width: 750px;
    height: 563px;
    margin-left: 50px;
    overflow: hidden;
    font-family: Roboto, "Noto Sans", sans-serif;
    color: #3c4043;
    letter-spacing: 0;
}

.map-canvas {
    width: 750px;
    height: 563px;
    font-family: Roboto, "Noto Sans", "Noto Sans Devanagari", sans-serif;
}

.area text {
    font-weight: 500;
    fill: #3c4043;
    paint-order: stroke;
    stroke: #fff;
    stroke-width: 2px;
    text-anchor: middle;
}

.area .big {
    font-size: 17px;
    letter-spacing: 2px;
    text-anchor: start;
}

.area .mid {
    font-size: 12.500px;
    letter-spacing: 1.600px;
    fill: #50555a;
}

.area .left {
    text-anchor: start;
}

.area .wide {
    letter-spacing: 2.300px;
}

.area .mid-anchor {
    text-anchor: middle;
}

.area .big-ish {
    font-size: 15px;
}

.hindi text {
    font-size: 12px;
    font-weight: 500;
    fill: #50555a;
    text-anchor: middle;
    paint-order: stroke;
    stroke: #fff;
    stroke-width: 2px;
}

.hindi .hindi-big {
    font-size: 17px;
    font-weight: 700;
    fill: #3c4043;
}

.place text {
    font-size: 17.800px;
    paint-order: stroke;
    stroke: #fff;
    stroke-width: 2px;
}

.place .small {
    font-size: 13px;
}

.place .end {
    text-anchor: end;
}

.place .red {
    fill: #e53935;
}

.place .dark-red {
    fill: #b31412;
}

.place .orange {
    fill: #e37400;
}

.place .green {
    fill: #188038;
    font-weight: 500;
    font-size: 18px;
}

.place .slate {
    fill: #5b7a8c;
}

.place .blue {
    fill: #3b82f0;
}

.place .pink {
    fill: #e91e63;
    font-weight: 500;
}

.pin-glyph {
    font-size: 15px;
    fill: #fff;
    text-anchor: middle;
}

.metro {
    font-size: 12px;
    font-weight: 700;
    fill: #fff;
    text-anchor: middle;
}

.google {
    font-size: 19px;
    font-weight: 500;
    paint-order: stroke;
    stroke: #fff;
    stroke-width: 1.500px;
}

.map-card {
    position: absolute;
    left: 13px;
    top: 13px;
    width: 376px;
    height: 183px;
    background: #fff;
    border-radius: 2px;
    box-shadow: 0 1px 4px rgba(0, 0, 0, 0.3);
    padding: 13px 15px;
    display: flex;
}

.card-main {
    width: 271px;
}

.card-title {
    font-size: 17.300px;
    line-height: 20px;
    font-weight: 500;
    color: #202124;
    white-space: nowrap;
}

.card-address {
    margin-top: 8px;
    font-size: 15px;
    line-height: 18px;
    color: #5b5b5b;
    white-space: nowrap;
}

.card-rating {
    display: flex;
    align-items: center;
    margin-top: 5px;
    height: 24px;
}

.rating-num {
    font-size: 17px;
    font-weight: 500;
    color: #5b5b5b;
}

.stars {
    margin-left: 4px;
    color: #e7711b;
    font-family: "DejaVu Sans", sans-serif;
    font-size: 17px;
    letter-spacing: -1.500px;
}

.star-off {
    color: #d7d7d7;
}

.reviews {
    margin-left: 14px;
}

.card-link {
    color: #1a73e8;
    font-size: 15px;
}

.larger {
    display: block;
    margin-top: 10px;
}

.card-dir {
    width: 80px;
    margin-left: -7px;
    display: flex;
    flex-direction: column;
    align-items: center;
    padding-top: 3px;
}

.card-dir svg {
    width: 24px;
    height: 24px;
    margin-bottom: 6px;
}

.map-thumb {
    position: absolute;
    left: 13px;
    top: 498px;
    width: 51px;
    height: 51px;
    border: 2px solid #fff;
    border-radius: 3px;
    box-shadow: 0 1px 4px rgba(0, 0, 0, 0.3);
    background:
        radial-gradient(circle at 10% 10%, #55624e 0 20%, transparent 40%),
        radial-gradient(circle at 80% 30%, #7d8263 0 25%, transparent 50%),
        #9b9578;
    overflow: hidden;
}

.map-thumb::before {
    content: "";
    position: absolute;
    left: -14px;
    bottom: -12px;
    width: 26px;
    height: 40px;
    background: #2f7197;
    transform: rotate(-18deg);
}

.zoom-ctl {
    position: absolute;
    left: 688px;
    top: 433px;
    width: 50px;
    height: 100px;
    background: #fff;
    border-radius: 2px;
    box-shadow: 0 1px 4px rgba(0, 0, 0, 0.15);
    display: flex;
    flex-direction: column;
    align-items: center;
    padding-top: 13px;
}

.zoom-ctl svg {
    width: 23px;
    height: 23px;
}

.zoom-sep {
    width: 38px;
    height: 1px;
    background: #e6e6e6;
    margin: 13px 0 13px;
}

.map-attrib {
    position: absolute;
    left: 269px;
    right: 0;
    bottom: 0;
    height: 17px;
    background: rgba(255, 255, 255, 0.72);
    padding-left: 6px;
    display: flex;
    align-items: center;
    font-size: 12.500px;
    color: #444;
    white-space: nowrap;
}

.attr-keys {
    width: 123px;
}

.attr-data {
    width: 152px;
}

.attr-terms {
    width: 89px;
}

/* Scrollbar */
.scrollbar {
    width: 21px;
    background: #f1f1f1;
    display: flex;
    flex-direction: column;
    align-items: center;
    position: relative;
    padding-top: 8px;
}

.arrow-up {
    width: 0;
    height: 0;
    border-left: 5px solid transparent;
    border-right: 5px solid transparent;
    border-bottom: 6px solid #505050;
}

.scroll-thumb {
    width: 17px;
    height: 230px;
    background: #c1c1c1;
    margin-top: auto;
    margin-bottom: 14px;
}

.arrow-down {
    width: 0;
    height: 0;
    border-left: 5px solid transparent;
    border-right: 5px solid transparent;
    border-top: 6px solid #a3a3a3;
    margin-bottom: 4px;
}

/* Taskbar */
.taskbar {
    height: 50px;
    background: linear-gradient(90deg, #d2e6ec, #d6e9ee 50%, #d2e6ec);
    display: flex;
    align-items: center;
    font-size: 17px;
    color: #222;
}

.start {
    width: 60px;
    padding-left: 20px;
}

.start svg {
    width: 20px;
    height: 20px;
}

.search {
    width: 360px;
    height: 50px;
    background: #fff;
    border: 1px solid #c9d3d6;
    border-bottom: 2px solid #c4c4c4;
    display: flex;
    align-items: center;
    position: relative;
    padding-left: 15px;
}

.search-icon {
    width: 20px;
    height: 20px;
}

.search-text {
    margin-left: 14px;
    font-size: 17.900px;
    color: #333;
}

.search-art {
    position: absolute;
    right: 0;
    bottom: 0;
    width: 96px;
    height: 47px;
}

.tb-apps {
    display: flex;
    height: 50px;
}

.tb-slot {
    width: 62px;
    height: 50px;
    display: flex;
    align-items: center;
    justify-content: center;
    position: relative;
}

.tb-slot svg {
    width: 30px;
    height: 30px;
}

.tb-slot .icon-sm {
    width: 20px;
    height: 24px;
}

.tb-slot.open::after,
.tb-slot.active::after {
    content: "";
    position: absolute;
    left: 5px;
    right: 6px;
    bottom: 0;
    height: 3px;
    background: #0078d4;
}

.tb-slot.active {
    background: #eef7fa;
}

.tb-slot.active::after {
    left: 0;
    right: 1px;
}

.mail-badge {
    position: absolute;
    left: 30px;
    top: 22px;
    width: 35px;
    height: 25px;
    border-radius: 13px;
    background: #cfd8db;
    border: 1px solid #555;
    font-size: 15px;
    line-height: 22px;
    text-align: center;
    color: #111;
    font-weight: 500;
}

.tray {
    flex: 1;
    display: flex;
    align-items: center;
    padding-left: 264px;
    font-size: 17px;
}

.gold-icon {
    width: 30px;
    height: 22px;
    margin-right: 9px;
}

.gold {
    margin-right: 13px;
}

.gold-pct {
    color: #1e7e34;
    margin-right: 31px;
    width: 58px;
    white-space: nowrap;
}

.tray-chev {
    width: 16px;
    height: 9px;
    margin-right: 12px;
}

.tray-cloud {
    width: 20px;
    height: 14px;
    margin-right: 14px;
}

.tray-cam {
    width: 14px;
    height: 20px;
    margin-right: 13px;
}

.tray-bat {
    width: 20px;
    height: 12px;
    margin-right: 12px;
}

.tray-wifi {
    width: 18px;
    height: 18px;
    margin-right: 9px;
}

.tray-vol {
    width: 20px;
    height: 18px;
    margin-right: 14px;
}

.lang {
    font-size: 14.500px;
    width: 29px;
}

.clock {
    width: 75px;
    margin-left: 16px;
    display: flex;
    flex-direction: column;
    align-items: center;
    font-size: 14.500px;
    line-height: 27px;
    white-space: nowrap;
}

.notify {
    position: relative;
    margin-left: 15px;
}

.notify svg {
    width: 20px;
    height: 20px;
}

.notify-badge {
    position: absolute;
    left: 9px;
    top: 9px;
    width: 21px;
    height: 21px;
    border-radius: 50%;
    background: #cfd8db;
    border: 1px solid #666;
    font-size: 14px;
    line-height: 19px;
    text-align: center;
}
```
